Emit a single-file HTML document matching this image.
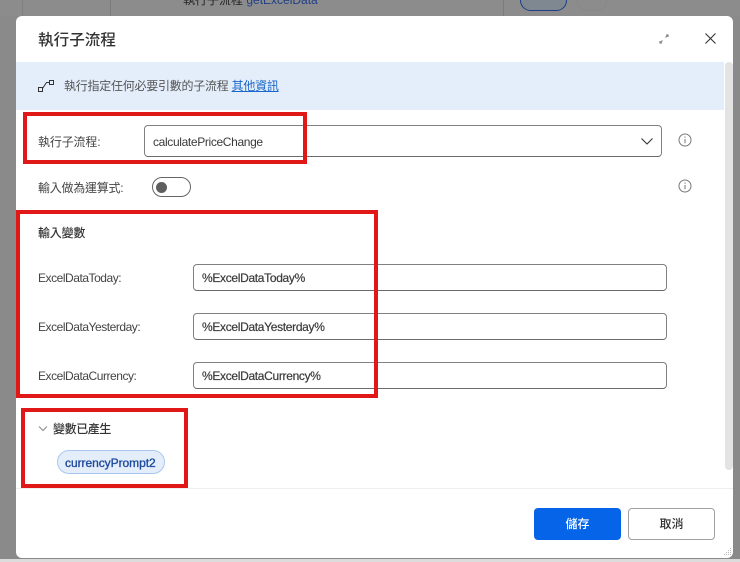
<!DOCTYPE html>
<html lang="zh-Hant">
<head>
<meta charset="utf-8">
<title>執行子流程</title>
<style>
html,body{margin:0;padding:0}
body{width:740px;height:562px;overflow:hidden;position:relative;background:#8a8a8a;font-family:"Liberation Sans","Noto Sans CJK TC",sans-serif;color:#2b2b2b}
.a{position:absolute;box-sizing:border-box;white-space:nowrap}
.t{font-size:12px;line-height:16px;color:#444}
.l{letter-spacing:-.46px}
.inp{background:#fff;border:1px solid #808080;border-bottom-color:#6a6a6a;border-radius:4px}
.val{font-size:12px;line-height:16px;color:#3a3a3a;letter-spacing:-.32px;-webkit-text-stroke:.2px #3a3a3a}
.red{border:4px solid #e01818}
.h{font-size:12px;line-height:16px;font-weight:500;color:#333}
</style>
</head>
<body>
<!-- backdrop -->
<div class="a" style="left:0;top:0;width:740px;height:16px;background:#8c8c8c"></div>
<div class="a" style="left:22px;top:0;width:1px;height:16px;background:#808080"></div>
<div class="a" style="left:110px;top:0;width:1px;height:16px;background:#7c7c7c"></div>
<div class="a" style="left:503px;top:0;width:1px;height:16px;background:#7c7c7c"></div>
<div class="a" style="left:183px;top:-8px;font-size:12px;line-height:16px;color:#222">執行子流程 <span style="color:#1f3f86">getExcelData</span></div>
<div class="a" style="left:520px;top:-10px;width:47px;height:21px;border:1px solid #1f3f86;border-radius:11px;background:#7f8791"></div>
<div class="a" style="left:577px;top:-8px;width:30px;height:19px;border:1px solid #888;border-radius:10px"></div>
<div class="a" style="left:0;top:559px;width:740px;height:3px;background:#dcdcdc"></div>

<!-- dialog -->
<div class="a" style="left:16px;top:16px;width:717px;height:542px;background:#fff;border-radius:6px"></div>
<div class="a" style="left:38px;top:31px;font-size:15.6px;line-height:20px;font-weight:500;color:#333">執行子流程</div>

<svg class="a" style="left:658px;top:33px" width="12" height="12" viewBox="0 0 12 12" fill="none" stroke="#777" stroke-width="1"><path d="M2 10L4.500 7.500M7.500 4.500L10 2M8 2h2v2M2 8v2h2"/></svg>
<svg class="a" style="left:704px;top:32px" width="13" height="13" viewBox="0 0 13 13" fill="none" stroke="#333" stroke-width="1.100"><path d="M1.500 1.500l10 10M11.500 1.500l-10 10"/></svg>

<!-- banner -->
<div class="a" style="left:16px;top:62px;width:708px;height:48px;background:#e4eefb"></div>
<svg class="a" style="left:37px;top:79px" width="18" height="15" viewBox="0 0 18 15" fill="none" stroke="#333" stroke-width="1"><rect x="1.500" y="8.500" width="4" height="4"/><rect x="12.500" y="1.500" width="4" height="4"/><path d="M5.500 9.500L9.500 3.500H12.500"/></svg>
<div class="a t" style="left:64px;top:78px;color:#555;letter-spacing:-.25px">執行指定任何必要引數的子流程 <span style="color:#1a66c9;text-decoration:underline">其他資訊</span></div>

<!-- scrollbar -->
<div class="a" style="left:725px;top:62px;width:8px;height:408px;background:#e3e3e3;border-radius:4px"></div>

<!-- subflow row -->
<div class="a t" style="left:38px;top:134px;letter-spacing:-.15px">執行子流程:</div>
<div class="a inp" style="left:144px;top:125px;width:518px;height:32px"></div>
<div class="a t" style="left:153px;top:134px;color:#3a3a3a;letter-spacing:-.35px">calculatePriceChange</div>
<svg class="a" style="left:640px;top:136px" width="14" height="10" viewBox="0 0 14 10" fill="none" stroke="#333" stroke-width="1.100"><path d="M1.500 2.500L7 8l5.500-5.500"/></svg>
<svg class="a" style="left:678px;top:133px" width="14" height="14" viewBox="0 0 14 14" fill="none" stroke="#777" stroke-width="1"><circle cx="7" cy="7" r="6"/><path d="M7 6v4.200M7 3.500v1.200"/></svg>

<!-- toggle row -->
<div class="a t" style="left:38px;top:180px;letter-spacing:-.25px">輸入做為運算式:</div>
<div class="a" style="left:152px;top:177px;width:39px;height:20px;border:1px solid #666;border-radius:10px;background:#fff"></div>
<div class="a" style="left:156px;top:181.500px;width:11px;height:11px;border-radius:50%;background:#5f5f5f"></div>
<svg class="a" style="left:678px;top:179px" width="14" height="14" viewBox="0 0 14 14" fill="none" stroke="#777" stroke-width="1"><circle cx="7" cy="7" r="6"/><path d="M7 6v4.200M7 3.500v1.200"/></svg>

<!-- inputs -->
<div class="a h" style="left:38px;top:225px;letter-spacing:-.2px">輸入變數</div>

<div class="a t l" style="left:38px;top:270px">ExcelDataToday:</div>
<div class="a inp" style="left:193px;top:264px;width:474px;height:27px"></div>
<div class="a val" style="left:202px;top:270px">%ExcelDataToday%</div>

<div class="a t l" style="left:38px;top:319px">ExcelDataYesterday:</div>
<div class="a inp" style="left:193px;top:313px;width:474px;height:27px"></div>
<div class="a val" style="left:202px;top:319px">%ExcelDataYesterday%</div>

<div class="a t l" style="left:38px;top:368px">ExcelDataCurrency:</div>
<div class="a inp" style="left:193px;top:362px;width:474px;height:27px"></div>
<div class="a val" style="left:202px;top:368px">%ExcelDataCurrency%</div>

<!-- generated vars -->
<svg class="a" style="left:38px;top:425px" width="10" height="8" viewBox="0 0 10 8" fill="none" stroke="#888" stroke-width="1"><path d="M1 1.500l4 4 4-4"/></svg>
<div class="a h" style="left:53px;top:421px;letter-spacing:-.4px">變數已產生</div>
<div class="a" style="left:57px;top:450px;width:108px;height:24px;background:#e4eefb;border:1px solid #a9c7ee;border-radius:12px"></div>
<div class="a" style="left:65px;top:455px;font-size:12px;line-height:16px;color:#1f4a9c;letter-spacing:-.05px;-webkit-text-stroke:.35px #1f4a9c">currencyPrompt2</div>

<!-- footer -->
<div class="a" style="left:16px;top:488px;width:717px;height:1px;background:#eeeeee"></div>
<div class="a" style="left:534px;top:508px;width:87px;height:32px;background:#0564e8;border-radius:4px;color:#fff;font-size:12px;line-height:32px;font-weight:500;text-align:center">儲存</div>
<div class="a" style="left:628px;top:508px;width:87px;height:32px;background:#fff;border:1px solid #a0a0a0;border-radius:4px;color:#333;font-size:12px;line-height:30px;font-weight:500;text-align:center">取消</div>

<!-- resize grip -->
<svg class="a" style="left:722px;top:547px" width="10" height="10" viewBox="0 0 10 10" fill="#bbb"><rect x="8" y="1" width="1" height="1"/><rect x="6" y="3" width="1" height="1"/><rect x="8" y="3" width="1" height="1"/><rect x="4" y="5" width="1" height="1"/><rect x="6" y="5" width="1" height="1"/><rect x="8" y="5" width="1" height="1"/><rect x="2" y="7" width="1" height="1"/><rect x="4" y="7" width="1" height="1"/><rect x="6" y="7" width="1" height="1"/><rect x="8" y="7" width="1" height="1"/></svg>

<!-- red highlight boxes -->
<div class="a red" style="left:23px;top:112px;width:284px;height:52px"></div>
<div class="a red" style="left:16px;top:210px;width:362px;height:188px"></div>
<div class="a red" style="left:21px;top:408px;width:167px;height:80px"></div>
</body>
</html>
